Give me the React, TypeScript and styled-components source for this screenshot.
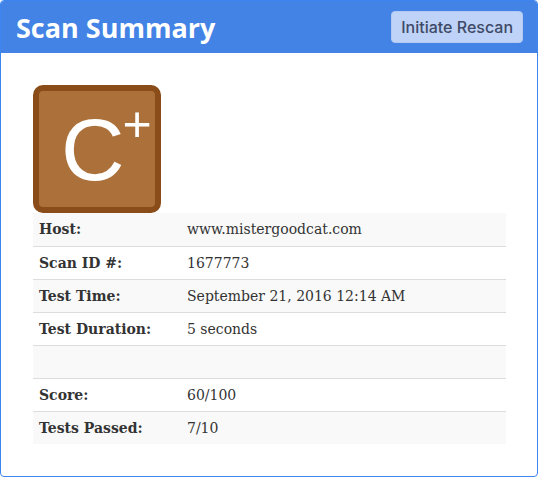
import React from "react";
import styled, { createGlobalStyle } from "styled-components";

const GlobalStyle = createGlobalStyle`
  body {
    margin: 0;
    background: #fff;
  }
`;

const Card = styled.div`
  width: 538px;
  height: 477px;
  box-sizing: border-box;
  border: 1px solid #3d86f2;
  border-radius: 4px;
  overflow: hidden;
  background: #fff;
`;

const Header = styled.div`
  height: 52px;
  background: #4283e5;
  display: flex;
  align-items: center;
  justify-content: space-between;
  padding: 0 14px 0 15px;
  box-sizing: border-box;
`;

const Title = styled.h1`
  margin: 0;
  color: #fff;
  font-family: "Open Sans", sans-serif;
  font-weight: 700;
  font-size: 27px;
`;

const RescanButton = styled.button`
  height: 32px;
  padding: 0 9px;
  border: 1px solid #b1c9f3;
  border-radius: 4px;
  background: #bed3f7;
  color: #3e4a66;
  font-family: "Inter", sans-serif;
  font-weight: 500;
  font-size: 16px;
  cursor: pointer;
`;

const Body = styled.div`
  padding: 32px;
`;

const Grade = styled.div`
  width: 128px;
  height: 128px;
  box-sizing: border-box;
  border: 6px solid #8a4c18;
  border-radius: 10px;
  background: #ac713a;
  display: flex;
  align-items: flex-start;
  padding: 15px 0 0 22px;
  color: #fff;
  font-family: "Liberation Sans", sans-serif;
`;

const Letter = styled.span`
  font-size: 88px;
  line-height: 1;
`;

const Modifier = styled.span`
  font-size: 50px;
  line-height: 1;
  margin: -7px 0 0 -2px;
`;

const Table = styled.table`
  width: 473px;
  border-collapse: collapse;
  font-family: "DejaVu Serif", serif;
  font-size: 14px;
  color: #333;
`;

const Row = styled.tr<{ $striped: boolean }>`
  height: 33px;
  background: ${(p) => (p.$striped ? "#f9f9f9" : "#fff")};
  & + & {
    border-top: 1px solid #ddd;
  }
`;

const Label = styled.th`
  width: 142px;
  text-align: left;
  padding: 0 6px;
  font-weight: 700;
`;

const Value = styled.td`
  padding: 0 6px 0 0;
`;

const rows: [string, string][] = [
  ["Host:", "www.mistergoodcat.com"],
  ["Scan ID #:", "1677773"],
  ["Test Time:", "September 21, 2016 12:14 AM"],
  ["Test Duration:", "5 seconds"],
  ["", ""],
  ["Score:", "60/100"],
  ["Tests Passed:", "7/10"],
];

const App: React.FC = () => {
  return (
    <>
      <GlobalStyle />
      <Card>
        <Header>
          <Title>Scan Summary</Title>
          <RescanButton>Initiate Rescan</RescanButton>
        </Header>
        <Body>
          <Grade>
            <Letter>C</Letter>
            <Modifier>+</Modifier>
          </Grade>
          <Table>
            <tbody>
              {rows.map(([label, value], i) => (
                <Row key={i} $striped={i % 2 === 0}>
                  <Label>{label}</Label>
                  <Value>{value}</Value>
                </Row>
              ))}
            </tbody>
          </Table>
        </Body>
      </Card>
    </>
  );
};

export default App;
